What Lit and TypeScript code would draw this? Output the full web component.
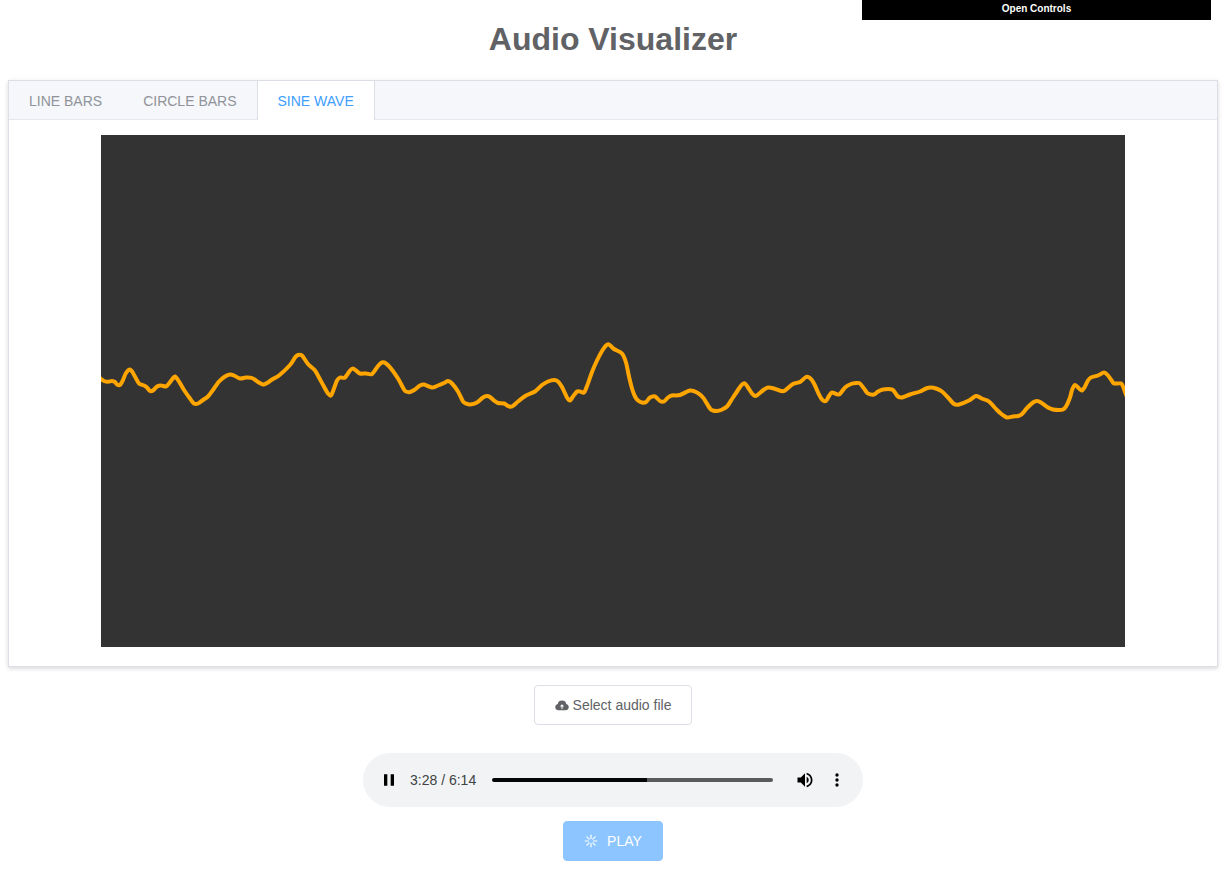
import { LitElement, html, css, svg } from "lit";
import { customElement, state } from "lit/decorators.js";

const TABS = ["LINE BARS", "CIRCLE BARS", "SINE WAVE"];

// Waveform samples in canvas units (1024 x 512).
const WAVE =
  "-2,242 0,244 3,246 7,246.7 11,246 14,247 16,249.5 19,250 22,245 25,238 29,234.5 32,238 35,243.5 38,248.5 43,250.5 46,252.5 49,256 52,255.5 56,251.5 60,250.5 65,251.5 68,248.5 71,244.5 74,241.5 78,246.5 83,255 89,263.5 93,268.5 97,268.5 102,265 107,261.5 112,255 118,246.5 124,241.5 129,239.5 133,240.5 139,243.5 145,242.5 151,243 157,247 162,249.5 166,248 171,244.5 178,240.5 189,230 194,222.5 197,220 201,220.5 207,229 214,235.5 218,242.5 224,253.5 227,258.5 230,260.5 233,253.5 236,245.5 239,242.5 244,242.5 249,235.5 252,233.5 255,235.5 259,238.5 265,238.5 271,239 277,231 281,227.5 285,228.5 290,233.5 297,243.5 303,254.5 305,256.5 309,257 314,254.5 319,250.5 323,249.5 331,252.5 337,250.5 343,248 347,246 351,248.5 357,256.5 362,266.5 365,268.5 369,269.5 376,267.5 382,262.5 386,261 389,262 393,265.5 397,268 403,268.5 407,271 411,271.5 417,266.5 425,260.5 434,256.5 441,250 447,246.5 453,245 457,246.5 461,252 466,262.5 469,265.5 472,261.5 476,256.5 479,256.5 483,257.5 486,251 491,237 496,225.5 501,216 505,210.5 508,209.5 513,214 521,218.5 525,227.5 528,241.5 531,253.5 534,261.5 537,265.5 541,267.5 545,267 549,262.5 554,261.5 559,266 563,266.5 567,262.5 571,260.5 579,260 589,255.5 596,257.5 602,262.5 609,273.5 612,275.5 616,276 620,275 626,271.5 632,262.5 638,253.5 641,249.5 644,248.5 647,252.5 651,258.5 654,261 657,259.5 663,254.5 667,252.5 673,253.5 680,256 684,255.5 692,249 699,247 705,242 709,243 713,248.5 718,259.5 721,264.5 725,266 728,261 731,257.5 738,259.5 744,252.5 750,249 755,248 759,248.5 764,255 767,258.5 773,259.5 777,256.5 782,254.5 791,254.5 794,257.5 797,261.5 801,262.5 809,259.5 819,256.5 825,253.5 830,252.5 835,253.5 841,256.5 847,262.5 853,269 858,269.5 868,265.5 875,261 882,264 888,266.5 896,275 901,279.5 906,282.5 912,281.5 917,281 921,279 926,273 932,267.5 936,266 940,267.5 947,272.5 952,274.5 958,275 962,274.5 965,271.5 969,262.5 971,255 974,250 978,253.5 981,255.5 984,251.5 987,245.5 990,242.5 997,240.5 1003,237.5 1007,240.5 1011,246 1013,248.5 1020,248.5 1022,251.5 1024,257 1026,262";

// Joins the samples with a smooth curve that passes through each of them.
function smoothPath(samples: string): string {
  const p = samples.split(" ").map((s) => s.split(",").map(Number));
  let d = `M${p[0]}`;
  for (let i = 0; i < p.length - 1; i++) {
    const before = p[Math.max(i - 1, 0)];
    const from = p[i];
    const to = p[i + 1];
    const after = p[Math.min(i + 2, p.length - 1)];
    const c1 = [0, 1].map((k) => from[k] + (to[k] - before[k]) / 7);
    const c2 = [0, 1].map((k) => to[k] - (after[k] - from[k]) / 7);
    d += `C${c1} ${c2} ${to}`;
  }
  return d;
}

const WAVE_PATH = smoothPath(WAVE);

@customElement("audio-player")
export class AudioPlayer extends LitElement {
  static styles = css`
    :host {
      display: flex;
      align-items: center;
      box-sizing: border-box;
      width: 500px;
      max-width: 100%;
      height: 54px;
      padding: 0 10px;
      border-radius: 27px;
      background: #f1f3f4;
    }
    .control {
      display: flex;
      align-items: center;
      justify-content: center;
      width: 32px;
      height: 32px;
      padding: 0;
      border: 0;
      background: none;
    }
    .control svg {
      width: 20px;
      height: 20px;
    }
    .time {
      margin: 0 16px 0 5px;
      font: 14px/20px "Liberation Sans", Arial, sans-serif;
      color: #404346;
      white-space: nowrap;
    }
    .seek {
      flex: 1;
      min-width: 0;
      height: 4px;
      margin: 0 16px 0 0;
      appearance: none;
      border-radius: 2px;
      background: linear-gradient(
        to right,
        #050505 var(--played),
        #5a5b5b var(--played)
      );
    }
    .seek::-webkit-slider-thumb {
      appearance: none;
      width: 0;
      height: 0;
    }
  `;

  @state() private position = 55;

  render() {
    return html`
      <button class="control" aria-label="Pause">
        <svg viewBox="0 0 24 24"><path d="M6 19h4V5H6v14zm8-14v14h4V5h-4z" /></svg>
      </button>
      <span class="time">3:28 / 6:14</span>
      <input
        class="seek"
        type="range"
        aria-label="Seek"
        min="0"
        max="100"
        .value=${String(this.position)}
        style="--played: ${this.position}%"
        @input=${(e: Event) =>
          (this.position = Number((e.target as HTMLInputElement).value))}
      />
      <button class="control" aria-label="Mute">
        <svg viewBox="0 0 24 24">
          <path
            d="M3 9v6h4l5 5V4L7 9H3zm13.5 3A4.5 4.5 0 0 0 14 7.97v8.05A4.47 4.47 0 0 0 16.5 12zM14 3.23v2.06c2.89.86 5 3.54 5 6.71s-2.11 5.85-5 6.71v2.06c4.01-.91 7-4.49 7-8.77s-2.99-7.86-7-8.77z"
          />
        </svg>
      </button>
      <button class="control" aria-label="More options">
        <svg viewBox="0 0 24 24">
          <path
            d="M12 8a2 2 0 1 0 0-4 2 2 0 0 0 0 4zm0 2a2 2 0 1 0 0 4 2 2 0 0 0 0-4zm0 6a2 2 0 1 0 0 4 2 2 0 0 0 0-4z"
          />
        </svg>
      </button>
    `;
  }
}

@customElement("app-root")
export class AppRoot extends LitElement {
  static styles = css`
    :host {
      display: block;
      padding: 20px 8px;
      font: 14px/20px "Liberation Sans", Arial, sans-serif;
      color: #606266;
    }
    .gui-toggle {
      display: flex;
      justify-content: center;
      position: absolute;
      top: 0;
      right: 15px;
      width: 349px;
      height: 20px;
      padding: 0;
      border: 0;
      background: #000;
      color: #fff;
      font: bold 10px/18px "Liberation Sans", Arial, sans-serif;
    }
    .title {
      margin: 0 0 22px;
      font-size: 32px;
      line-height: 38px;
      text-align: center;
    }
    .card {
      border: 1px solid #dcdfe6;
      background: #fff;
      box-shadow: 0 2px 4px 0 rgba(0, 0, 0, 0.12), 0 0 6px 0 rgba(0, 0, 0, 0.04);
    }
    .tabs {
      display: flex;
      height: 38px;
      border-bottom: 1px solid #e4e7ed;
      background: #f5f7fa;
    }
    .tab {
      height: 39px;
      margin-left: -1px;
      padding: 1px 20px 0;
      border: 1px solid transparent;
      border-width: 0 1px;
      background: none;
      color: #909399;
      font: 14px/38px "Liberation Sans", Arial, sans-serif;
    }
    .tab.active {
      border-color: #dcdfe6;
      background: #fff;
      color: #409eff;
    }
    .panel {
      display: flex;
      justify-content: center;
      padding: 15px 15px 19px;
    }
    .scope {
      display: block;
      width: 100%;
      max-width: 1024px;
      background: #333;
    }
    .actions {
      display: flex;
      flex-direction: column;
      align-items: center;
      margin-top: 18px;
    }
    .button {
      display: flex;
      align-items: center;
      box-sizing: border-box;
      height: 40px;
      padding: 0 20px;
      border: 1px solid #dcdfe6;
      border-radius: 4px;
      background: #fff;
      color: #606266;
      font: 14px/20px "Liberation Sans", Arial, sans-serif;
      gap: 4px;
    }
    .button svg {
      width: 14px;
      height: 14px;
    }
    .button.primary {
      gap: 9px;
      border-color: #8cc5ff;
      background: #8cc5ff;
      color: #fff;
    }
    .player {
      margin: 28px 0 14px;
    }
  `;

  @state() private active = 2;

  render() {
    return html`
      <button class="gui-toggle">Open Controls</button>
      <h1 class="title">Audio Visualizer</h1>
      <section class="card">
        <div class="tabs" role="tablist">
          ${TABS.map(
            (name, i) => html`<button
              class="tab ${i === this.active ? "active" : ""}"
              role="tab"
              aria-selected=${i === this.active}
              @click=${() => (this.active = i)}
            >${name}</button>`
          )}
        </div>
        <div class="panel" role="tabpanel">
          <svg class="scope" viewBox="0 0 1024 512">
            <path d=${WAVE_PATH} fill="none" stroke="orange" stroke-width="4" stroke-linejoin="round" />
          </svg>
        </div>
      </section>
      <div class="actions">
        <button class="button">
          <svg viewBox="0 0 14 14">
            <path
              d="M3.6 12.2A3.2 3.2 0 0 1 2.7 5.900 4.400 4.400 0 0 1 11.300 5.900A3.200 3.200 0 0 1 10.400 12.200z"
              fill="currentColor"
            />
            <path d="M7 6.200L4.800 8.500H6.500V11H7.500V8.500H9.200z" fill="#fff" />
          </svg>
          Select audio file
        </button>
        <audio-player class="player"></audio-player>
        <button class="button primary" disabled>
          <svg viewBox="0 0 14 14" stroke="currentColor" stroke-linecap="round" stroke-width="1.2">
            ${[0, 45, 90, 135, 180, 225, 270, 315].map(
              (a) => svg`<path d="M7 1.200V4.400" transform="rotate(${a} 7 7)" />`
            )}
          </svg>
          PLAY
        </button>
      </div>
    `;
  }
}
